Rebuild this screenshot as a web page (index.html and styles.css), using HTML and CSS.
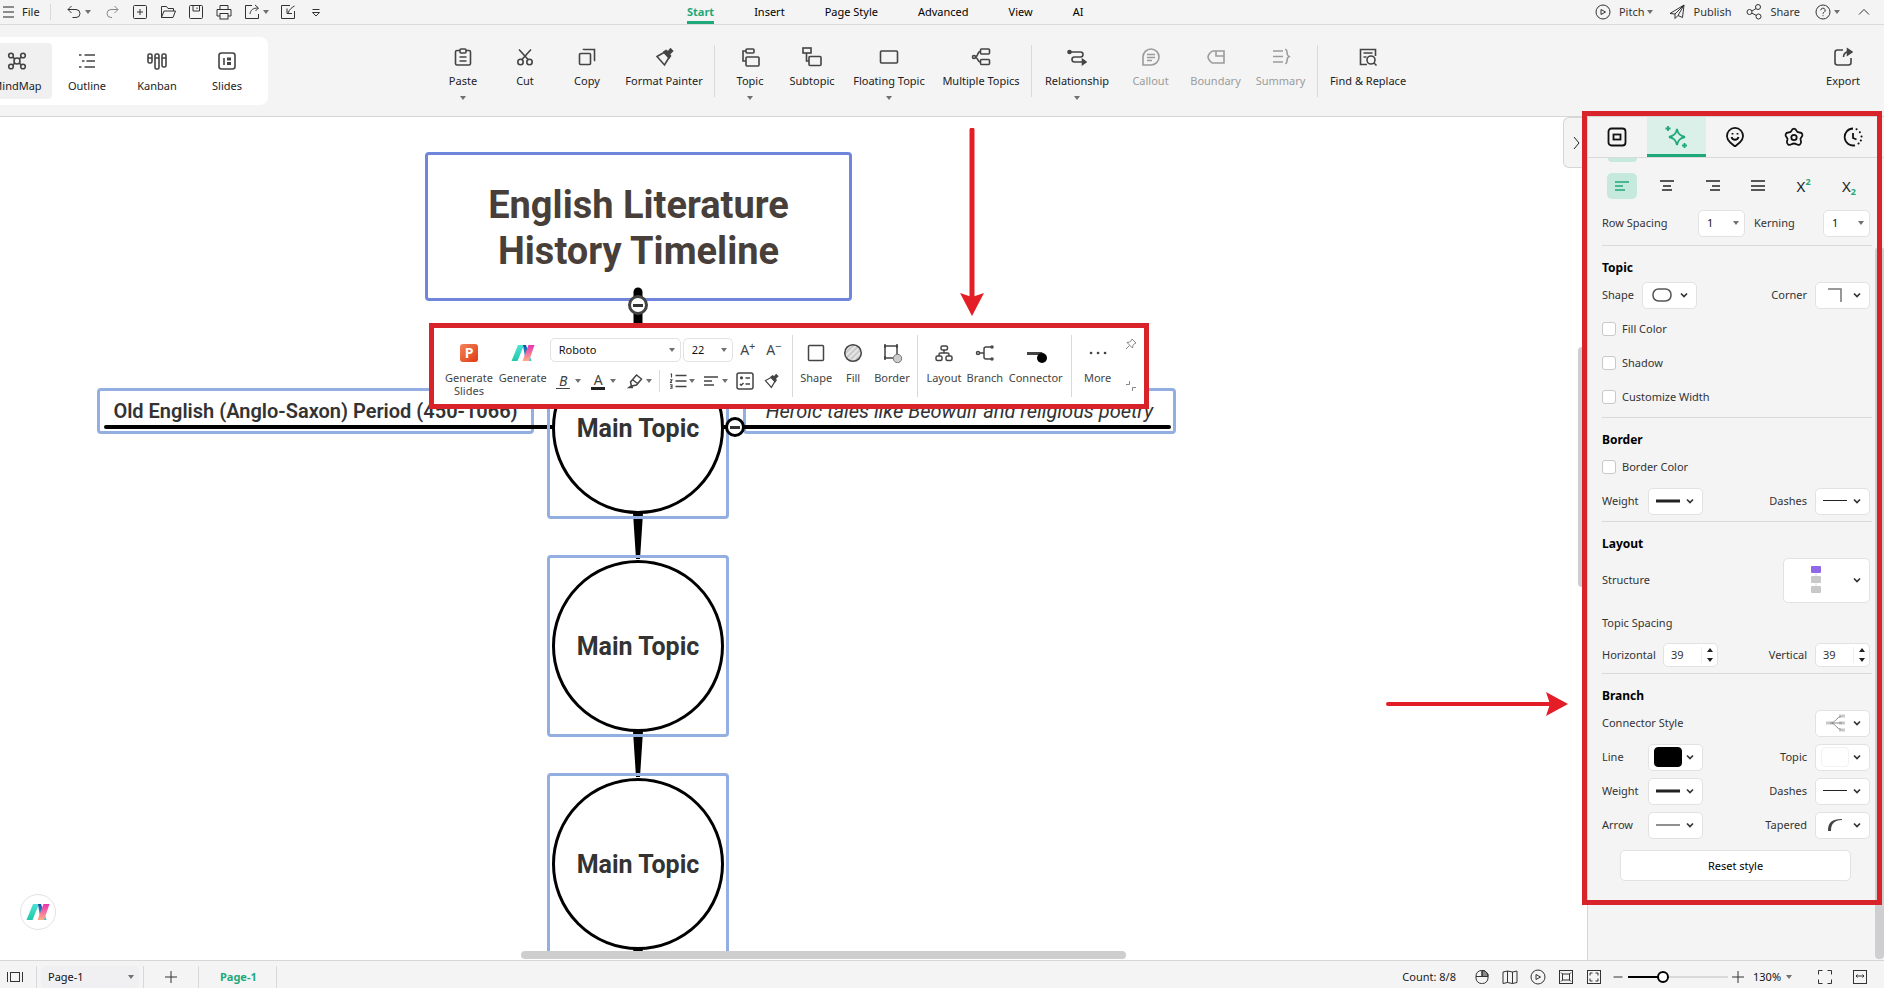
FILE: index.html
```
<!DOCTYPE html>
<html lang="en">
<head>
    <meta charset="UTF-8">
    <meta name="viewport" content="width=device-width, initial-scale=1.0">
    <title>English Literature History Timeline</title>
    <link rel="stylesheet" href="styles.css">
</head>
<body>
    <!-- Shared icons -->
    <svg class="sprite" aria-hidden="true">
        <defs>
            <linearGradient id="g-teal" x1="0" y1="0" x2="0" y2="1"><stop offset="0" stop-color="#4fe3d6"/><stop offset="1" stop-color="#1fc9a8"/></linearGradient>
            <linearGradient id="g-blue" x1="0" y1="0" x2="0" y2="1"><stop offset="0" stop-color="#1450a8"/><stop offset="1" stop-color="#35cbe0"/></linearGradient>
            <linearGradient id="g-pink" x1="0" y1="0" x2="0" y2="1"><stop offset="0" stop-color="#e832b4"/><stop offset="1" stop-color="#ffae86"/></linearGradient>
            <linearGradient id="g-ppt" x1="0" y1="0" x2="1" y2="1"><stop offset="0" stop-color="#f4835a"/><stop offset="1" stop-color="#e03a12"/></linearGradient>
            <pattern id="hatch" width="4" height="4" patternUnits="userSpaceOnUse" patternTransform="rotate(45)"><rect width="4" height="4" fill="#e6e6e6" stroke="none"/><path d="M1 0v4" stroke="#aaa" stroke-width="1"/></pattern>
        </defs>
        <symbol id="caret" viewBox="0 0 8 8"><path d="M1 2h6L4 6z" fill="#707070" stroke="none"/></symbol>
        <symbol id="chevron" viewBox="0 0 10 10"><path d="M2 3.500l3 3 3-3" stroke="#333" stroke-width="1.700"/></symbol>
        <symbol id="ai-logo" viewBox="0 0 24 20">
            <path d="M7 2h6L6.500 18H.5z" fill="url(#g-teal)"/><path d="M12 2h3l5.500 16h-6z" fill="url(#g-blue)"/><path d="M17.500 2h6L18 18h-6.500z" fill="url(#g-pink)"/>
        </symbol>
        <symbol id="menu" viewBox="0 0 20 20"><path d="M5 5h11M5 10h11M5 15h11"/></symbol>
        <symbol id="undo" viewBox="0 0 20 20"><path d="M7.500 4L4 7.500 7.500 11M4 7.500h8a3.800 3.800 0 0 1 0 8H8.500"/></symbol>
        <symbol id="redo" viewBox="0 0 20 20"><path d="M12.500 4L16 7.500 12.500 11M16 7.500H9a4 4 0 0 0-4 4 4 4 0 0 0 4 4h1"/></symbol>
        <symbol id="new" viewBox="0 0 20 20"><rect x="3.500" y="3.500" width="13" height="13" rx="1"/><path d="M10 7v6M7 10h6"/></symbol>
        <symbol id="open" viewBox="0 0 20 20"><path d="M3.500 15.500v-11h5l1.500 2h5.500v2.500M3.500 15.500L6 9h11.500l-2.500 6.500z"/></symbol>
        <symbol id="save" viewBox="0 0 20 20"><rect x="3.500" y="3.500" width="13" height="13" rx="1"/><path d="M7 3.500v5.500h6.500V3.500M11 5.500v1.500"/></symbol>
        <symbol id="print" viewBox="0 0 20 20"><path d="M6 7V3.500h8V7M6 14H3V7.500h14V14h-3"/><rect x="6" y="11.500" width="8" height="5.500"/></symbol>
        <symbol id="share-box" viewBox="0 0 20 20"><path d="M10 3.500H3.500v13h13V12M8 12c.5-4 3-6 8-6M13 3l3.500 3L13.500 9"/></symbol>
        <symbol id="import" viewBox="0 0 20 20"><path d="M12 3.500H3.500v13h13V9M16.500 4c-2 1-5 3-6.500 7M9 6.500v5h5"/></symbol>
        <symbol id="more-down" viewBox="0 0 20 20"><path d="M6.500 7.500h7M6.500 10.500l3.500 3.500 3.500-3.500z"/></symbol>
        <symbol id="play" viewBox="0 0 20 20"><circle cx="10" cy="10" r="7"/><path d="M8 7.500v5l4.500-2.500z"/></symbol>
        <symbol id="plane" viewBox="0 0 20 20"><path d="M3 11.500L17 3l-1.500 12.500-4.500-2L8 16.500v-4.500zM8 12L17 3l-6 10.500"/></symbol>
        <symbol id="nodes" viewBox="0 0 20 20"><circle cx="5.500" cy="10" r="2.500"/><circle cx="14" cy="5" r="2.500"/><circle cx="14.500" cy="14.500" r="2.500"/><path d="M8 9l4-2.500M8 11.200l4.200 2.200"/></symbol>
        <symbol id="help" viewBox="0 0 20 20"><circle cx="10" cy="10" r="7"/><path d="M7.800 8.300a2.200 2.200 0 1 1 3.200 2c-.8.400-1 .7-1 1.500M10 13.200v1"/></symbol>
        <symbol id="up" viewBox="0 0 20 20"><path d="M5 12.500l5-5 5 5"/></symbol>
        <symbol id="mindmap" viewBox="0 0 20 20"><circle cx="10" cy="10" r="3"/><circle cx="4" cy="4.500" r="2.300"/><circle cx="16" cy="4.500" r="2.300"/><circle cx="4" cy="15.500" r="2.300"/><circle cx="16" cy="15.500" r="2.300"/><path d="M5.700 6.200L8 8M14.300 6.200L12 8M5.700 13.800L8 12M14.300 13.800L12 12"/></symbol>
        <symbol id="outline" viewBox="0 0 20 20"><path d="M2 4h2.500M7.500 4H18M5 10h2.500M9.500 10H18M2 16h2.500M7.500 16H18"/></symbol>
        <symbol id="kanban" viewBox="0 0 20 20"><rect x="1" y="3" width="4" height="9" rx="1.500"/><rect x="8" y="3" width="4" height="15" rx="1.500"/><rect x="15" y="3" width="4" height="13" rx="1.500"/><path d="M1 7h4M8 7h4M15 7h4"/></symbol>
        <symbol id="slides" viewBox="0 0 20 20"><rect x="2" y="2" width="16" height="16" rx="2.500"/><path d="M7 7v7"/><path d="M10 8h4M10 12.500h4" stroke-width="3"/></symbol>
        <symbol id="paste" viewBox="0 0 20 20"><path d="M7 3.500H4a1.500 1.500 0 0 0-1.500 1.500v11.500A1.500 1.500 0 0 0 4 18h12a1.500 1.500 0 0 0 1.500-1.500V5A1.500 1.500 0 0 0 16 3.500h-3"/><rect x="7" y="2" width="6" height="4" rx="1"/><path d="M6.500 10h7M6.500 14h7"/></symbol>
        <symbol id="cut" viewBox="0 0 20 20"><path d="M4 2.500l9.500 10.500M16 2.500L6.500 13"/><circle cx="5.500" cy="15" r="2.700"/><circle cx="14.500" cy="15" r="2.700"/></symbol>
        <symbol id="copy" viewBox="0 0 20 20"><rect x="2.500" y="6.500" width="11" height="11" rx="1"/><path d="M6.500 3V2.500h11v11H17"/></symbol>
        <symbol id="painter" viewBox="0 0 20 20"><path d="M10 5.500l-7 4 7.500 8.500 4.500-7.500z"/><path d="M10 5l2-1.500 2 1.500 2.500-3L18.500 4 15.500 7l1 2-1.500 2z" fill="currentColor"/></symbol>
        <symbol id="topic" viewBox="0 0 20 20"><rect x="6" y="2" width="8" height="4" rx="1"/><rect x="6" y="10" width="13" height="9" rx="1"/><path d="M6 4H3v10h3"/></symbol>
        <symbol id="subtopic" viewBox="0 0 20 20"><rect x="1" y="1" width="8" height="5"/><rect x="7" y="9.500" width="12" height="9" rx="1"/><path d="M4.500 6v8H7"/></symbol>
        <symbol id="floating" viewBox="0 0 20 20"><rect x="1.500" y="4" width="17" height="12" rx="1"/></symbol>
        <symbol id="multi" viewBox="0 0 20 20"><rect x="9.500" y="2" width="9" height="5" rx="1"/><rect x="9.500" y="12.500" width="9" height="5" rx="1"/><circle cx="3" cy="10" r="1.500"/><path d="M4.500 9.500c3 0 1.500-5 5-5M4.500 10.500c3 0 1.500 4.500 5 4.500"/></symbol>
        <symbol id="relation" viewBox="0 0 20 20"><circle cx="2.500" cy="5" r="1.500" fill="currentColor"/><path d="M3 5h10.500a2.500 2.500 0 0 1 0 5H7.500a2.500 2.500 0 0 0 0 5H17"/><path d="M15.500 12.500l3.500 2.500-3.500 2.500z" fill="currentColor"/></symbol>
        <symbol id="callout" viewBox="0 0 20 20"><path d="M2 18v-8a8 8 0 1 1 8 8zM6 7.500h8M6 10.500h8M6 13.500h5"/></symbol>
        <symbol id="boundary" viewBox="0 0 20 20"><path d="M7 4h11v12H7c-2 0-5-4-5-6s3-6 5-6zM10 4v5h8"/></symbol>
        <symbol id="summary" viewBox="0 0 20 20"><path d="M2 4h10M2 9.500h10M2 15h10M14 2.500c2 0 2 1 2 3s0 3 2 4c-2 1-2 2-2 4s0 3-2 3"/></symbol>
        <symbol id="find" viewBox="0 0 20 20"><path d="M9 17.500H2.500v-15h15V9M5.500 6h9M5.500 10h3"/><circle cx="13" cy="13" r="4"/><path d="M16 16l2.500 2.500"/></symbol>
        <symbol id="export" viewBox="0 0 20 20"><path d="M10 3H4.500A2.500 2.500 0 0 0 2 5.500v10A2.500 2.500 0 0 0 4.500 18h11a2.500 2.500 0 0 0 2.500-2.500V11M10.500 10c0-4 3-5.500 7-5.500"/><path d="M14.500 2L19 5l-4.500 3z" fill="currentColor"/></symbol>
        <symbol id="tab-topic" viewBox="0 0 20 20"><rect x="1.500" y="1.500" width="17" height="17" rx="3"/><rect x="6.500" y="7.500" width="7" height="5"/></symbol>
        <symbol id="tab-style" viewBox="0 0 24 24"><path d="M13 4c1 5 3 7 8 8-5 1-7 3-8 8-1-5-3-7-8-8 5-1 7-3 8-8zM4 1v5M1.500 3.500h5M20.500 18v5M18 20.500h5"/></symbol>
        <symbol id="tab-emoji" viewBox="0 0 20 20"><path d="M10 19.500l-5-4.300A8 8 0 1 1 15 15.200zM6.500 10a3.600 3.600 0 0 0 7 0M7.500 6v1.500M12.500 6v1.500"/></symbol>
        <symbol id="tab-clip" viewBox="0 0 20 20"><path d="M7.500 3.800c1-3 4-3 5 0 .5 1.700 1.500 1.700 3 1.700 3 0 4 3 1.700 5-1.500 1.300-.7 2-.2 3.800.7 3-2 4.500-4.500 3-1.500-1-3.500-1-5 0-2.500 1.500-5.200 0-4.500-3 .5-1.800 1.300-2.500-.2-3.800-2.300-2-1.300-5 1.700-5 1.500 0 2.500 0 3-1.700z"/><circle cx="10" cy="10.500" r="2.700"/></symbol>
        <symbol id="tab-time" viewBox="0 0 20 20"><path d="M10 1.500a8.500 8.500 0 1 0 2 16.800M10 6v5l3.500 1.500"/><path d="M13.500 2.300h.1M16.800 5.300h.1M18.500 9.500h.1M17.800 13.500h.1M15.500 16.500h.1" stroke-width="2" stroke-linecap="round"/></symbol>
        <symbol id="al-left" viewBox="0 0 20 20"><path d="M3 6h14M3 10h8M3 14h10"/></symbol>
        <symbol id="al-center" viewBox="0 0 20 20"><path d="M3 5h14M6 10h8M5 14h10"/></symbol>
        <symbol id="al-right" viewBox="0 0 20 20"><path d="M3 5h14M9 10h8M7 14h10"/></symbol>
        <symbol id="al-full" viewBox="0 0 20 20"><path d="M3 5h14M3 10h14M3 14h14"/></symbol>
        <symbol id="pen" viewBox="0 0 20 20"><path d="M5.500 11l6-7 5 4-5 6-5 1zM8 9l4.500 3.500M6.500 14.500L4 16.500h4"/></symbol>
        <symbol id="numbers" viewBox="0 0 20 20"><path d="M7.500 4.500h11M7.500 10h11M7.500 15.500h11"/><path d="M2.500 3h1v3.500M2 8.800h2L2.500 11.500H4M2 13.800h2v3.500H2M2.500 15.500H4" stroke-width="1.100"/></symbol>
        <symbol id="checks" viewBox="0 0 20 20"><rect x="2" y="2" width="16" height="16" rx="2"/><circle cx="6.500" cy="6.800" r="1.600" fill="currentColor" stroke="none"/><path d="M10.500 7H15M10.500 13H15M5 13l1.200 1.200L8.500 12"/></symbol>
        <symbol id="shape" viewBox="0 0 20 20"><rect x="2.500" y="2.500" width="15" height="15" rx="1"/></symbol>
        <symbol id="fill" viewBox="0 0 20 20"><circle cx="10" cy="10" r="8.300" fill="url(#hatch)"/></symbol>
        <symbol id="border" viewBox="0 0 20 20"><rect x="3" y="3" width="12" height="12"/><path d="M2 3h2M14 3h2M2 15h2" stroke-width="3.500"/><circle cx="15.500" cy="15.500" r="4.200" fill="#ccc" stroke="#777" stroke-width="1"/></symbol>
        <symbol id="layout" viewBox="0 0 20 20"><rect x="7" y="3" width="6.500" height="4" rx="1.500"/><rect x="2" y="13" width="6" height="4.500" rx="1.500"/><rect x="12" y="13" width="6" height="4.500" rx="1.500"/><path d="M10 7v3M5 13v-1.500c0-1 .5-1.500 1.500-1.500h7c1 0 1.500.5 1.500 1.500V13"/></symbol>
        <symbol id="branch" viewBox="0 0 20 20"><circle cx="3" cy="10" r="1.500"/><circle cx="17" cy="4" r="1"/><circle cx="17" cy="16" r="1"/><path d="M4.500 10H9M16 4h-5c-1.300 0-2 .7-2 2v8c0 1.300.7 2 2 2h5"/></symbol>
        <symbol id="connector" viewBox="0 0 24 20"><path d="M3 9h16l-4 3H3z" fill="#444"/><circle cx="18" cy="15" r="5" fill="#000"/></symbol>
        <symbol id="dots" viewBox="0 0 20 20"><path d="M3 10h.1M10 10h.1M17 10h.1" stroke-width="2.600" stroke-linecap="round"/></symbol>
        <symbol id="pin" viewBox="0 0 12 12"><path d="M7 1l4 4-1.500.5-1.500 2-.5 2.500L2 4.500l2.500-.5 2-1.500zM4.500 7.500L1 11"/></symbol>
        <symbol id="shrink" viewBox="0 0 12 12"><path d="M1 4.500h3.500V1M7.500 11V7.500H11"/></symbol>
        <symbol id="page-view" viewBox="0 0 20 20"><rect x="5.500" y="5.500" width="9" height="9"/><path d="M2.500 5v10M17.500 5v10"/></symbol>
        <symbol id="plus" viewBox="0 0 20 20"><path d="M10 4v12M4 10h12"/></symbol>
        <symbol id="minus" viewBox="0 0 20 20"><path d="M5.500 10h9"/></symbol>
        <symbol id="mouse" viewBox="0 0 20 20"><path d="M10 3.500h2.500L16 7v2.500h-6z" fill="#888"/><rect x="4" y="3.500" width="12" height="13" rx="5.500"/><path d="M4 9.500h12M10 3.500v6"/></symbol>
        <symbol id="map" viewBox="0 0 20 20"><path d="M3 5l4.500-1 5 1L17 4v11.500l-4.500 1-5-1L3 16.500zM7.500 4v11.500M12.500 5v11.500"/></symbol>
        <symbol id="fit-page" viewBox="0 0 20 20"><rect x="3.500" y="3.500" width="13" height="13"/><rect x="6.500" y="7" width="7" height="6"/><path d="M5 5.500l1.500 1.500M15 5.500L13.500 7M5 14.500L6.500 13M15 14.500L13.500 13"/></symbol>
        <symbol id="fit-all" viewBox="0 0 20 20"><rect x="3.500" y="3.500" width="13" height="13"/><path d="M6 8.500V6h2.500M11.500 6H14v2.500M14 11.500V14h-2.500M8.500 14H6v-2.500"/></symbol>
        <symbol id="fullscreen" viewBox="0 0 20 20"><path d="M3.500 7.500v-4h4M12.500 3.500h4v4M16.500 12.500v4h-4M7.500 16.500h-4v-4"/></symbol>
        <symbol id="fit-width" viewBox="0 0 20 20"><rect x="3.500" y="3.500" width="13" height="13"/><path d="M6 9h8M7.500 7.500L6 9l1.500 1.500M12.500 7.500L14 9l-1.500 1.500"/></symbol>
    </svg>

    <header class="topbar">
        <div class="quick">
            <button class="tool file"><svg class="icon"><use href="#menu"/></svg>File</button>
            <span class="sep"></span>
            <button class="tool undo" aria-label="Undo"><svg class="icon"><use href="#undo"/></svg><svg class="caret"><use href="#caret"/></svg></button>
            <button class="tool faded" aria-label="Redo"><svg class="icon"><use href="#redo"/></svg></button>
            <button class="tool" aria-label="New"><svg class="icon"><use href="#new"/></svg></button>
            <button class="tool" aria-label="Open"><svg class="icon"><use href="#open"/></svg></button>
            <button class="tool" aria-label="Save"><svg class="icon"><use href="#save"/></svg></button>
            <button class="tool" aria-label="Print"><svg class="icon"><use href="#print"/></svg></button>
            <button class="tool" aria-label="Export"><svg class="icon"><use href="#share-box"/></svg><svg class="caret"><use href="#caret"/></svg></button>
            <button class="tool" aria-label="Import"><svg class="icon"><use href="#import"/></svg></button>
            <button class="tool" aria-label="Customize"><svg class="icon"><use href="#more-down"/></svg></button>
        </div>
        <nav class="menu">
            <a href="#" class="active">Start</a>
            <a href="#">Insert</a>
            <a href="#">Page Style</a>
            <a href="#">Advanced</a>
            <a href="#">View</a>
            <a href="#">AI</a>
        </nav>
        <div class="account">
            <button class="tool pitch"><svg class="icon"><use href="#play"/></svg>Pitch<svg class="caret"><use href="#caret"/></svg></button>
            <button class="tool"><svg class="icon"><use href="#plane"/></svg>Publish</button>
            <button class="tool"><svg class="icon"><use href="#nodes"/></svg>Share</button>
            <button class="tool" aria-label="Help"><svg class="icon"><use href="#help"/></svg><svg class="caret"><use href="#caret"/></svg></button>
            <button class="tool" aria-label="Collapse ribbon"><svg class="icon"><use href="#up"/></svg></button>
        </div>
    </header>

    <div class="ribbon">
        <div class="modes">
            <button class="mode active"><svg class="icon"><use href="#mindmap"/></svg>MindMap</button>
            <button class="mode"><svg class="icon"><use href="#outline"/></svg>Outline</button>
            <button class="mode"><svg class="icon"><use href="#kanban"/></svg>Kanban</button>
            <button class="mode"><svg class="icon"><use href="#slides"/></svg>Slides</button>
        </div>
        <div class="actions">
            <button class="action"><svg class="icon"><use href="#paste"/></svg>Paste<svg class="caret"><use href="#caret"/></svg></button>
            <button class="action"><svg class="icon"><use href="#cut"/></svg>Cut</button>
            <button class="action"><svg class="icon"><use href="#copy"/></svg>Copy</button>
            <button class="action wide"><svg class="icon"><use href="#painter"/></svg>Format Painter</button>
            <span class="sep"></span>
            <button class="action"><svg class="icon"><use href="#topic"/></svg>Topic<svg class="caret"><use href="#caret"/></svg></button>
            <button class="action"><svg class="icon"><use href="#subtopic"/></svg>Subtopic</button>
            <button class="action wide"><svg class="icon"><use href="#floating"/></svg>Floating Topic<svg class="caret"><use href="#caret"/></svg></button>
            <button class="action wide"><svg class="icon"><use href="#multi"/></svg>Multiple Topics</button>
            <span class="sep"></span>
            <button class="action medium"><svg class="icon"><use href="#relation"/></svg>Relationship<svg class="caret"><use href="#caret"/></svg></button>
            <button class="action small" disabled><svg class="icon"><use href="#callout"/></svg>Callout</button>
            <button class="action small" disabled><svg class="icon"><use href="#boundary"/></svg>Boundary</button>
            <button class="action small" disabled><svg class="icon"><use href="#summary"/></svg>Summary</button>
            <span class="sep"></span>
            <button class="action wide"><svg class="icon"><use href="#find"/></svg>Find &amp; Replace</button>
        </div>
        <button class="action export"><svg class="icon"><use href="#export"/></svg>Export</button>
    </div>

    <div class="workspace">
        <main class="canvas">
            <!-- connectors between the topics -->
            <svg class="links" aria-hidden="true">
                <path d="M638 175v60" stroke="#000" stroke-width="9" stroke-linecap="round"/>
                <path d="M106 310H1169" stroke="#000" stroke-width="4" stroke-linecap="round"/>
                <path d="M633 396h10l-3 46h-4zM633 614h10l-3 46h-4zM633 832h10l-1 6h-8z" fill="#000"/>
            </svg>

            <div class="node title">English Literature<br>History Timeline</div>
            <div class="node side left">Old English (Anglo-Saxon) Period (450-1066)</div>
            <div class="node side right">Heroic tales like Beowulf and religious poetry</div>
            <div class="node main first"><span>Main Topic</span></div>
            <div class="node main second"><span>Main Topic</span></div>
            <div class="node main third"><span>Main Topic</span></div>
            <button class="fold fold-title" aria-label="Collapse"></button>
            <button class="fold fold-main" aria-label="Collapse"></button>

            <div class="floatbar">
                <button class="item"><svg class="icon" viewBox="0 0 20 20"><rect x="1" y="1" width="18" height="18" rx="3" fill="url(#g-ppt)" stroke="none"/><text x="10" y="15" class="ppt">P</text></svg>Generate Slides</button>
                <button class="item"><svg class="icon logo"><use href="#ai-logo"/></svg>Generate</button>
                <div class="format">
                    <div class="line">
                        <span class="drop font"><select aria-label="Font"><option>Roboto</option></select><svg class="caret"><use href="#caret"/></svg></span>
                        <span class="drop size"><select aria-label="Font size"><option>22</option></select><svg class="caret"><use href="#caret"/></svg></span>
                        <button class="glyph letter" aria-label="Increase font size">A<sup>+</sup></button>
                        <button class="glyph letter" aria-label="Decrease font size">A<sup>−</sup></button>
                    </div>
                    <div class="line second-line">
                        <button class="glyph split"><span class="bold">B</span><svg class="caret"><use href="#caret"/></svg></button>
                        <button class="glyph split"><span class="color">A</span><svg class="caret"><use href="#caret"/></svg></button>
                        <button class="glyph split" aria-label="Highlight"><svg class="icon"><use href="#pen"/></svg><svg class="caret"><use href="#caret"/></svg></button>
                        <span class="sep"></span>
                        <button class="glyph split" aria-label="Numbering"><svg class="icon"><use href="#numbers"/></svg><svg class="caret"><use href="#caret"/></svg></button>
                        <button class="glyph split" aria-label="Alignment"><svg class="icon"><use href="#al-left"/></svg><svg class="caret"><use href="#caret"/></svg></button>
                        <button class="glyph" aria-label="Checklist"><svg class="icon"><use href="#checks"/></svg></button>
                        <button class="glyph" aria-label="Format Painter"><svg class="icon brush"><use href="#painter"/></svg></button>
                    </div>
                </div>
                <span class="sep"></span>
                <button class="item slim"><svg class="icon"><use href="#shape"/></svg>Shape</button>
                <button class="item slim"><svg class="icon"><use href="#fill"/></svg>Fill</button>
                <button class="item mid"><svg class="icon"><use href="#border"/></svg>Border</button>
                <span class="sep"></span>
                <button class="item mid"><svg class="icon"><use href="#layout"/></svg>Layout</button>
                <button class="item mid"><svg class="icon"><use href="#branch"/></svg>Branch</button>
                <button class="item big"><svg class="icon logo"><use href="#connector"/></svg>Connector</button>
                <span class="sep"></span>
                <button class="item mid"><svg class="icon"><use href="#dots"/></svg>More</button>
                <div class="corner-tools">
                    <button class="glyph" aria-label="Pin"><svg><use href="#pin"/></svg></button>
                    <button class="glyph" aria-label="Shrink"><svg><use href="#shrink"/></svg></button>
                </div>
            </div>

            <svg class="arrow arrow-down" viewBox="0 0 26 190"><path d="M13 2v168" stroke="#e31e26" stroke-width="5" stroke-linecap="round"/><path d="M1 165l12 4 12-4-12 23z" fill="#e31e26"/></svg>
            <svg class="arrow arrow-right" viewBox="0 0 184 26"><path d="M2 13h162" stroke="#e31e26" stroke-width="4" stroke-linecap="round"/><path d="M160 1l22 12-22 12 4-12z" fill="#e31e26"/></svg>

            <button class="assistant" aria-label="AI assistant"><svg class="icon logo"><use href="#ai-logo"/></svg></button>
            <button class="handle" aria-label="Hide panel"><svg class="icon" viewBox="0 0 20 20"><path d="M8 4l5 6-5 6"/></svg></button>
            <div class="scroll-x"></div>
            <div class="scroll-y"></div>
        </main>

        <aside class="panel">
            <div class="tabs">
                <button class="tab" aria-label="Topic"><svg class="icon"><use href="#tab-topic"/></svg></button>
                <button class="tab active" aria-label="Style"><svg class="icon spark"><use href="#tab-style"/></svg></button>
                <button class="tab" aria-label="Icons"><svg class="icon"><use href="#tab-emoji"/></svg></button>
                <button class="tab" aria-label="Clipart"><svg class="icon"><use href="#tab-clip"/></svg></button>
                <button class="tab" aria-label="Tasks"><svg class="icon"><use href="#tab-time"/></svg></button>
            </div>

            <section class="paragraph">
                <div class="pill-end"></div>
                <div class="aligns">
                    <button class="align active" aria-label="Align left"><svg class="icon"><use href="#al-left"/></svg></button>
                    <button class="align" aria-label="Align center"><svg class="icon"><use href="#al-center"/></svg></button>
                    <button class="align" aria-label="Align right"><svg class="icon"><use href="#al-right"/></svg></button>
                    <button class="align" aria-label="Justify"><svg class="icon"><use href="#al-full"/></svg></button>
                    <button class="align script">X<sup>2</sup></button>
                    <button class="align script">X<sub>2</sub></button>
                </div>
                <div class="row">
                    <label class="grow" for="row-spacing">Row Spacing</label>
                    <span class="drop"><select id="row-spacing"><option>1</option></select><svg class="caret"><use href="#caret"/></svg></span>
                    <label class="kerning" for="kerning">Kerning</label>
                    <span class="drop"><select id="kerning"><option>1</option></select><svg class="caret"><use href="#caret"/></svg></span>
                </div>
            </section>

            <section>
                <h2>Topic</h2>
                <div class="row">
                    <span id="l-shape">Shape</span>
                    <button class="pick" aria-haspopup="listbox" aria-labelledby="l-shape"><svg class="sample" viewBox="0 0 28 20"><rect x="5" y="4" width="18" height="12" rx="5.500" stroke="#555" stroke-width="1.500"/></svg><svg class="chev"><use href="#chevron"/></svg></button>
                    <span class="end" id="l-corner">Corner</span>
                    <button class="pick" aria-haspopup="listbox" aria-labelledby="l-corner"><svg class="sample" viewBox="0 0 28 20"><path d="M7 4h13v13" stroke="#777" stroke-width="1.500"/></svg><svg class="chev"><use href="#chevron"/></svg></button>
                </div>
                <div class="row"><input type="checkbox" id="fill-color"><label for="fill-color">Fill Color</label></div>
                <div class="row"><input type="checkbox" id="shadow"><label for="shadow">Shadow</label></div>
                <div class="row"><input type="checkbox" id="custom-width"><label for="custom-width">Customize Width</label></div>
            </section>

            <section>
                <h2>Border</h2>
                <div class="row"><input type="checkbox" id="border-color"><label for="border-color">Border Color</label></div>
                <div class="row">
                    <span class="name" id="l-bweight">Weight</span>
                    <button class="pick" aria-haspopup="listbox" aria-labelledby="l-bweight"><svg class="sample" viewBox="0 0 28 20"><path d="M2 10h24" stroke="#222" stroke-width="3"/></svg><svg class="chev"><use href="#chevron"/></svg></button>
                    <span class="end" id="l-bdash">Dashes</span>
                    <button class="pick" aria-haspopup="listbox" aria-labelledby="l-bdash"><svg class="sample" viewBox="0 0 28 20"><path d="M2 9.500h24" stroke="#222"/></svg><svg class="chev"><use href="#chevron"/></svg></button>
                </div>
            </section>

            <section>
                <h2>Layout</h2>
                <div class="row tall">
                    <span class="grow" id="l-structure">Structure</span>
                    <button class="pick structure" aria-haspopup="listbox" aria-labelledby="l-structure"><svg class="tree" viewBox="0 0 12 30"><path d="M6 4v22" stroke="#ddd"/><rect x="1" y="1" width="10" height="7" rx="1" fill="#8e68e8" stroke="none"/><rect x="1" y="11" width="10" height="7" rx="1" fill="#c8c8c8" stroke="none"/><rect x="1" y="21" width="10" height="7" rx="1" fill="#c8c8c8" stroke="none"/></svg><svg class="chev"><use href="#chevron"/></svg></button>
                </div>
                <div class="row">Topic Spacing</div>
                <div class="row short">
                    <label class="horizontal" for="sp-h">Horizontal</label>
                    <span class="spin"><input type="number" id="sp-h" value="39"><svg viewBox="0 0 8 18"><path d="M1 6l3-4 3 4zM1 12l3 4 3-4z" fill="#222" stroke="none"/></svg></span>
                    <label class="end" for="sp-v">Vertical</label>
                    <span class="spin"><input type="number" id="sp-v" value="39"><svg viewBox="0 0 8 18"><path d="M1 6l3-4 3 4zM1 12l3 4 3-4z" fill="#222" stroke="none"/></svg></span>
                </div>
            </section>

            <section>
                <h2>Branch</h2>
                <div class="row">
                    <span class="grow" id="l-style">Connector Style</span>
                    <button class="pick" aria-haspopup="listbox" aria-labelledby="l-style"><svg class="sample" viewBox="0 0 28 20"><path d="M5 10h7M18 3h6M18 10h6M18 17h6" stroke="#c8c8c8" stroke-width="3"/><path d="M9 10h12M11 10c3-1 5-6 9-6.500M11 10c3 1 5 6 9 6.500" stroke="#888"/></svg><svg class="chev"><use href="#chevron"/></svg></button>
                </div>
                <div class="row">
                    <span class="name" id="l-line">Line</span>
                    <button class="pick" aria-haspopup="listbox" aria-labelledby="l-line"><span class="swatch black"></span><svg class="chev"><use href="#chevron"/></svg></button>
                    <span class="end" id="l-topic">Topic</span>
                    <button class="pick" aria-haspopup="listbox" aria-labelledby="l-topic"><span class="swatch"></span><svg class="chev"><use href="#chevron"/></svg></button>
                </div>
                <div class="row">
                    <span class="name" id="l-weight">Weight</span>
                    <button class="pick" aria-haspopup="listbox" aria-labelledby="l-weight"><svg class="sample" viewBox="0 0 28 20"><path d="M2 10h24" stroke="#222" stroke-width="3"/></svg><svg class="chev"><use href="#chevron"/></svg></button>
                    <span class="end" id="l-dash">Dashes</span>
                    <button class="pick" aria-haspopup="listbox" aria-labelledby="l-dash"><svg class="sample" viewBox="0 0 28 20"><path d="M2 9.500h24" stroke="#222"/></svg><svg class="chev"><use href="#chevron"/></svg></button>
                </div>
                <div class="row">
                    <span class="name" id="l-arrow">Arrow</span>
                    <button class="pick" aria-haspopup="listbox" aria-labelledby="l-arrow"><svg class="sample" viewBox="0 0 28 20"><path d="M2 10h24" stroke="#909090" stroke-width="2"/></svg><svg class="chev"><use href="#chevron"/></svg></button>
                    <span class="end" id="l-taper">Tapered</span>
                    <button class="pick" aria-haspopup="listbox" aria-labelledby="l-taper"><svg class="sample" viewBox="0 0 28 20"><path d="M7 16c0-8 3-12 14-12v1c-8 0-11 4-11 11z" fill="#444" stroke="none"/></svg><svg class="chev"><use href="#chevron"/></svg></button>
                </div>
                <button class="reset">Reset style</button>
            </section>
            <div class="panel-scroll"></div>
            <div class="highlight"></div>
        </aside>
    </div>

    <footer class="status">
        <button class="tool" aria-label="Page view"><svg class="icon"><use href="#page-view"/></svg></button>
        <span class="sep"></span>
        <span class="drop page"><select aria-label="Page"><option>Page-1</option></select><svg class="caret"><use href="#caret"/></svg></span>
        <span class="sep"></span>
        <button class="tool add" aria-label="Add page"><svg class="icon"><use href="#plus"/></svg></button>
        <span class="sep"></span>
        <a href="#" class="page-tab">Page-1</a>
        <span class="sep"></span>
        <div class="status-right">
            <span class="count">Count: 8/8</span>
            <button class="tool" aria-label="Mouse mode"><svg class="icon"><use href="#mouse"/></svg></button>
            <button class="tool" aria-label="Map"><svg class="icon"><use href="#map"/></svg></button>
            <button class="tool" aria-label="Play"><svg class="icon"><use href="#play"/></svg></button>
            <button class="tool" aria-label="Fit page"><svg class="icon"><use href="#fit-page"/></svg></button>
            <button class="tool" aria-label="Fit all"><svg class="icon"><use href="#fit-all"/></svg></button>
            <div class="zoom">
                <button class="tool" aria-label="Zoom out"><svg class="icon"><use href="#minus"/></svg></button>
                <input type="range" min="0" max="100" value="33" aria-label="Zoom">
                <button class="tool" aria-label="Zoom in"><svg class="icon"><use href="#plus"/></svg></button>
            </div>
            <span class="drop percent"><select aria-label="Zoom level"><option>130%</option></select><svg class="caret"><use href="#caret"/></svg></span>
            <button class="tool" aria-label="Full screen"><svg class="icon"><use href="#fullscreen"/></svg></button>
            <button class="tool fit" aria-label="Fit width"><svg class="icon"><use href="#fit-width"/></svg></button>
        </div>
    </footer>
</body>
</html>
```
FILE: styles.css
```
* {
    box-sizing: border-box;
}
body {
    margin: 0;
    height: 100vh;
    overflow: hidden;
    display: flex;
    flex-direction: column;
    font-family: "Noto Sans", "Open Sans", sans-serif;
    font-size: 11px;
    line-height: 16px;
    color: #222;
    background-color: #f4f4f4;
}
button, select, input {
    font: inherit;
    color: inherit;
    margin: 0;
}
button {
    padding: 0;
    border: none;
    background: none;
}
a {
    color: inherit;
    text-decoration: none;
}
svg {
    fill: none;
    stroke: currentColor;
    flex: none;
    display: block;
}
select {
    appearance: none;
    border: none;
    background: none;
    outline: none;
    width: 100%;
    padding: 0 0 0 8px;
}
.sprite {
    position: absolute;
    width: 0;
    height: 0;
}
.icon {
    width: 20px;
    height: 20px;
}
.icon.logo {
    width: 24px;
}
.logo, .arrow {
    stroke: none;
}
.caret {
    width: 8px;
    height: 8px;
}
.sep {
    width: 1px;
    flex: none;
    background-color: #d9d9d9;
}
.tool {
    display: flex;
    align-items: center;
    color: #333;
}

/* Top bar */
.topbar {
    display: flex;
    height: 25px;
    border-bottom: 1px solid #dadada;
}
.quick {
    display: flex;
    align-items: center;
    gap: 8px;
    width: 687px;
    padding-bottom: 1px;
}
.file {
    color: #222;
    gap: 4px;
    margin: 0 2px 0 -2px;
}
.topbar .sep {
    height: 16px;
}
.topbar .faded {
    color: #888;
}
.undo {
    margin: 0 2px 0 5px;
}
.menu {
    display: flex;
    gap: 40px;
    color: #000;
}
.menu a {
    padding-top: 4px;
    border-bottom: 3px solid transparent;
}
.menu .active {
    color: #1fa87a;
    font-weight: bold;
    border-color: #1fa87a;
}
.account {
    display: flex;
    align-items: center;
    gap: 13px;
    margin-left: auto;
    padding: 0 10px 1px 0;
}
.account .icon {
    margin-right: 6px;
}
.account .tool:nth-last-child(-n+2) .icon {
    margin-right: 0;
}
.pitch {
    gap: 2px;
}
.account .pitch .icon {
    margin-right: 4px;
}

/* Ribbon */
.ribbon {
    display: flex;
    height: 92px;
    border-bottom: 1px solid #d6d6d6;
}
.modes {
    display: flex;
    height: 68px;
    margin: 12px 164px 0 -18px;
    padding: 6px 6px 6px 0;
    background-color: #fff;
    border-radius: 0 8px 8px 0;
}
.mode {
    width: 70px;
    display: flex;
    flex-direction: column;
    align-items: center;
    gap: 7px;
    padding-top: 8px;
    border-radius: 4px;
}
.mode .icon, .action .icon {
    color: #444;
    stroke-width: 1.6;
}
.mode.active {
    background-color: #f0f0f0;
}
.actions {
    display: flex;
}
.actions .sep {
    height: 52px;
    margin: 20px 4px 0;
}
.action {
    width: 62px;
    display: flex;
    flex-direction: column;
    align-items: center;
    justify-content: flex-start;
    gap: 6px;
    padding-top: 22px;
    white-space: nowrap;
}
.action .caret {
    margin-top: -1px;
}
.action.wide {
    width: 92px;
}
.action.medium {
    width: 82px;
}
.action.small {
    width: 65px;
}
.action:disabled, .action:disabled .icon {
    color: #9b9b9b;
}
.action.export {
    width: 82px;
    margin-left: auto;
}

/* Canvas */
.workspace {
    flex: 1;
    min-height: 0;
    display: flex;
}
.canvas {
    position: relative;
    flex: 1;
    overflow: hidden;
    background-color: #fff;
    font-family: Roboto, sans-serif;
}
.links {
    position: absolute;
    width: 100%;
    height: 100%;
    stroke: none;
    z-index: 1;
}
.node {
    position: absolute;
    border: 3px solid #93aee0;
    border-radius: 4px;
    text-align: center;
    color: #333;
    white-space: nowrap;
}
.title {
    left: 425px;
    top: 35px;
    width: 427px;
    height: 149px;
    padding-top: 27px;
    border-color: #6f86dc;
    color: #483f3a;
    font-size: 38px;
    line-height: 46px;
    font-weight: bold;
}
.side {
    top: 271px;
    height: 46px;
    font-size: 20px;
    line-height: 40px;
}
.left {
    left: 97px;
    width: 437px;
    font-weight: 600;
}
.right {
    left: 743px;
    width: 433px;
    font-style: italic;
}
.main {
    left: 547px;
    width: 182px;
    height: 182px;
    padding: 2px;
    font-size: 25px;
    font-weight: bold;
    z-index: 2;
}
.main span {
    display: flex;
    align-items: center;
    justify-content: center;
    height: 100%;
    padding-top: 2px;
    border: 3px solid #000;
    border-radius: 50%;
    background-color: #fff;
}
.first {
    top: 220px;
}
.second {
    top: 438px;
}
.third {
    top: 656px;
}
.fold {
    position: absolute;
    width: 20px;
    height: 20px;
    border: 3px solid #000;
    border-radius: 50%;
    background: linear-gradient(#333, #333) center / 10px 3px no-repeat #fff;
    z-index: 3;
}
.fold-title {
    left: 628px;
    top: 178px;
    border-color: #444;
}
.fold-main {
    left: 725px;
    top: 300px;
}
.scroll-x {
    position: absolute;
    left: 521px;
    bottom: 1px;
    width: 605px;
    height: 8px;
    border-radius: 4px;
    background-color: #cecece;
    z-index: 4;
}
.scroll-y {
    position: absolute;
    right: 0;
    top: 230px;
    width: 9px;
    height: 240px;
    border-radius: 4px;
    background-color: #cecece;
}
.handle {
    position: absolute;
    top: 0;
    right: 0;
    width: 24px;
    height: 51px;
    padding-left: 2px;
    border: 1px solid #d6d6d6;
    border-right: none;
    border-radius: 6px 0 0 6px;
    background-color: #f4f4f4;
}
.assistant {
    position: absolute;
    left: 20px;
    top: 777px;
    width: 36px;
    height: 36px;
    display: flex;
    align-items: center;
    justify-content: center;
    border: 1px solid #e2e2e6;
    border-radius: 50%;
    background-color: #fff;
}
.arrow-down {
    position: absolute;
    left: 959px;
    top: 11px;
    width: 26px;
    height: 190px;
}
.arrow-right {
    position: absolute;
    left: 1386px;
    top: 574px;
    width: 184px;
    height: 26px;
}

/* Floating toolbar */
.floatbar {
    position: absolute;
    left: 429px;
    top: 206px;
    width: 720px;
    height: 86px;
    display: flex;
    padding-left: 8px;
    border: 5px solid #d9232a;
    background-color: #fff;
    color: #444;
    font-family: "Noto Sans", "Open Sans", sans-serif;
    z-index: 5;
}
.floatbar .icon, .floatbar .glyph svg {
    stroke-width: 1.5;
}
.item {
    width: 54px;
    display: flex;
    flex-direction: column;
    align-items: center;
    justify-content: flex-start;
    gap: 8px;
    padding-top: 15px;
    line-height: 13px;
}
.item.slim {
    width: 37px;
}
.item.mid {
    width: 41px;
}
.item.big {
    width: 61px;
}
.floatbar > .sep {
    height: 62px;
    margin: 7px 5px 0;
}
.format {
    display: flex;
    flex-direction: column;
    gap: 7px;
    padding-top: 10px;
    width: 237px;
}
.line {
    display: flex;
    align-items: center;
    height: 24px;
}
.drop {
    position: relative;
    display: flex;
    align-items: center;
    width: 47px;
    height: 27px;
    border: 1px solid #e2e2e2;
    border-radius: 5px;
    background-color: #fff;
    color: #111;
}
.drop .caret {
    position: absolute;
    right: 4px;
    pointer-events: none;
}
.line .drop {
    height: 24px;
    margin-right: 2px;
}
.drop.font {
    width: 131px;
}
.drop.size {
    width: 50px;
}
.glyph {
    width: 26px;
    display: flex;
    align-items: center;
    justify-content: center;
}
.glyph.split {
    width: 35px;
}
.letter {
    font-size: 14px;
}
.letter sup {
    font-size: 11px;
    line-height: 10px;
    margin-bottom: 9px;
}
.second-line {
    padding-left: 2px;
}
.second-line .sep {
    height: 22px;
    margin: 0 6px 0 2px;
}
.second-line .sep ~ .split {
    width: 33px;
}
.bold, .color {
    width: 14px;
    margin-right: 4px;
    font-size: 14px;
    line-height: 15px;
    border-bottom: 1px solid #444;
}
.bold {
    font-style: italic;
}
.color {
    border-bottom: 3px solid #222;
}
.icon.brush {
    width: 16px;
    height: 16px;
}
.corner-tools {
    display: flex;
    flex-direction: column;
    justify-content: space-between;
    padding: 10px 0 12px;
    color: #888;
}
.corner-tools svg {
    width: 12px;
    height: 12px;
}
.corner-tools .glyph svg {
    stroke-width: 1;
}
.ppt {
    fill: #fff;
    stroke: none;
    font-size: 14px;
    font-weight: bold;
    text-anchor: middle;
}

/* Style panel */
.panel {
    position: relative;
    width: 297px;
    border-left: 1px solid #d6d6d6;
    color: #333;
}
.tabs {
    display: flex;
    height: 41px;
    padding-right: 2px;
    border-bottom: 1px solid #dadada;
    color: #111;
}
.tab {
    flex: 1;
    display: flex;
    align-items: center;
    justify-content: center;
    border-bottom: 3px solid transparent;
    padding-top: 2px;
    stroke-width: 1.8;
}
.tab.active {
    color: #1fa87a;
    background-color: #dcf0ea;
    border-color: #1fa87a;
}
.spark {
    width: 24px;
    height: 24px;
}
section {
    margin: 0 12px 0 14px;
    padding: 11px 2px 3px 0;
    border-bottom: 1px solid #dadada;
}
section:last-of-type {
    border-bottom: none;
}
.paragraph {
    padding-top: 0;
    padding-bottom: 5px;
}
.pill-end {
    width: 29px;
    height: 4px;
    margin-left: 6px;
    border-radius: 0 0 5px 5px;
    background-color: #c6e9de;
}
.aligns {
    display: flex;
    justify-content: space-between;
    padding: 11px 6px 7px 5px;
}
.align {
    width: 30px;
    height: 26px;
    display: flex;
    align-items: center;
    justify-content: center;
    border-radius: 5px;
    stroke-width: 1.5;
    color: #222;
}
.align.active {
    color: #1fa87a;
    background-color: #c6e9de;
}
.script {
    font-size: 15px;
}
.script sup, .script sub {
    color: #1fa87a;
    font-size: 9px;
    line-height: 9px;
    font-weight: bold;
}
.script sup {
    margin-bottom: 10px;
}
.script sub {
    margin-top: 10px;
}
h2 {
    margin: 0;
    font-size: 12px;
    line-height: 21px;
    color: #000;
}
.row {
    display: flex;
    align-items: center;
    height: 34px;
}
.row.tall {
    height: 52px;
}
.row.short {
    height: 30px;
}
.grow {
    flex: 1;
}
.name {
    width: 46px;
}
.kerning {
    width: 78px;
    padding-left: 9px;
}
.horizontal {
    width: 61px;
}
.end {
    margin-left: auto;
    margin-right: 8px;
}
.row > #l-shape {
    width: 40px;
}
.pick {
    width: 55px;
    height: 27px;
    display: flex;
    align-items: center;
    justify-content: center;
    gap: 3px;
    padding-right: 2px;
    border: 1px solid #e2e2e2;
    border-radius: 5px;
    background-color: #fff;
}
.sample {
    width: 28px;
    height: 20px;
}
.chev {
    width: 10px;
    height: 10px;
}
.structure {
    width: 87px;
    height: 45px;
    gap: 30px;
    padding-left: 20px;
}
.tree {
    width: 12px;
    height: 30px;
}
.swatch {
    width: 28px;
    height: 20px;
    border: 1px solid #f2f2f2;
    border-radius: 4px;
}
.black {
    background-color: #000;
    border-color: #000;
}
input[type="checkbox"] {
    appearance: none;
    width: 14px;
    height: 14px;
    margin-right: 6px;
    border: 1px solid #c9c9c9;
    border-radius: 3px;
    background-color: #fff;
}
.spin {
    display: flex;
    align-items: center;
    width: 55px;
    height: 24px;
    border: 1px solid #e2e2e2;
    border-radius: 5px;
    background-color: #fff;
}
.spin input {
    appearance: textfield;
    width: 38px;
    padding: 0 0 0 7px;
    border: none;
    border-right: 1px solid #eee;
    background: none;
}
.spin input::-webkit-inner-spin-button {
    display: none;
}
.spin svg {
    width: 8px;
    height: 18px;
    margin-left: 4px;
}
.reset {
    display: block;
    width: 231px;
    height: 31px;
    margin: 8px 0 0 18px;
    border: 1px solid #e2e2e2;
    border-radius: 5px;
    background-color: #fff;
    color: #000;
}
.panel-scroll {
    position: absolute;
    right: 0;
    top: 130px;
    bottom: 1px;
    width: 9px;
    border-radius: 4px;
    background-color: #cfcfd2;
}
.highlight {
    position: absolute;
    top: -6px;
    left: -6px;
    right: 2px;
    height: 794px;
    border: 5px solid #d9232a;
    pointer-events: none;
    z-index: 6;
}

/* Status bar */
.status {
    display: flex;
    align-items: center;
    height: 28px;
    padding: 5px 14px 0 5px;
    border-top: 1px solid #d6d6d6;
}
.status > .sep {
    height: 22px;
}
.status > .tool {
    margin-right: 11px;
}
.drop.page {
    width: 98px;
    height: 22px;
    margin: 0 4px;
    border: none;
    background-color: #f0f0f2;
}
.page select {
    padding-left: 7px;
}
.status > .add {
    margin: 0 17px;
}
.page-tab {
    padding: 0 19px 0 21px;
    color: #1fa87a;
    font-weight: bold;
}
.status-right {
    display: flex;
    align-items: center;
    gap: 8px;
    margin-left: auto;
}
.count {
    margin-right: 8px;
}
.zoom {
    display: flex;
    align-items: center;
    margin: 0 -7px 0 -4px;
}
input[type="range"] {
    appearance: none;
    width: 100px;
    height: 2px;
    background: linear-gradient(to right, #000 33%, #d9d9d9 33%);
}
input[type="range"]::-webkit-slider-thumb {
    appearance: none;
    width: 12px;
    height: 12px;
    border: 2px solid #000;
    border-radius: 50%;
    background-color: #fff;
}
.drop.percent {
    width: 48px;
    height: 20px;
    margin-right: 10px;
    border: none;
    background: none;
}
.percent select {
    padding-left: 4px;
}
.fit {
    margin-left: 7px;
}
```
